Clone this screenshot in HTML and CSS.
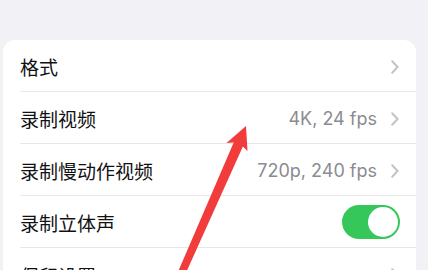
FILE: index.html
```html
<!DOCTYPE html>
<html lang="zh-CN">
<head>
<meta charset="utf-8">
<link rel="stylesheet" href="styles.css">
</head>
<body>
<div class="page">
  <div class="card">
    <div class="row">
      <div class="row-inner">
        <span class="label">格式</span>
        <span class="chev"><svg viewBox="0 0 8 14" width="8" height="14"><path d="M1.2 1.2 L6.6 7 L1.2 12.8" fill="none" stroke="#c4c4c8" stroke-width="2" stroke-linecap="round" stroke-linejoin="round"/></svg></span>
      </div>
    </div>
    <div class="row">
      <div class="row-inner">
        <span class="label">录制视频</span>
        <span class="value">4K, 24 fps</span>
        <span class="chev"><svg viewBox="0 0 8 14" width="8" height="14"><path d="M1.2 1.2 L6.6 7 L1.2 12.8" fill="none" stroke="#c4c4c8" stroke-width="2" stroke-linecap="round" stroke-linejoin="round"/></svg></span>
      </div>
    </div>
    <div class="row">
      <div class="row-inner">
        <span class="label">录制慢动作视频</span>
        <span class="value">720p, 240 fps</span>
        <span class="chev"><svg viewBox="0 0 8 14" width="8" height="14"><path d="M1.2 1.2 L6.6 7 L1.2 12.8" fill="none" stroke="#c4c4c8" stroke-width="2" stroke-linecap="round" stroke-linejoin="round"/></svg></span>
      </div>
    </div>
    <div class="row">
      <div class="row-inner">
        <span class="label">录制立体声</span>
        <span class="toggle"><span class="knob"></span></span>
      </div>
    </div>
    <div class="row">
      <div class="row-inner">
        <span class="label">保留设置</span>
        <span class="chev"><svg viewBox="0 0 8 14" width="8" height="14"><path d="M1.2 1.2 L6.6 7 L1.2 12.8" fill="none" stroke="#c4c4c8" stroke-width="2" stroke-linecap="round" stroke-linejoin="round"/></svg></span>
      </div>
    </div>
  </div>
  <svg class="arrow" viewBox="0 0 428 270" width="428" height="270">
    <polygon points="246,126 247.5,151 242.9,146.4 184.3,276.5 177.3,273.5 233.7,142.4 226.5,143" fill="#f23b3b"/>
  </svg>
</div>
</body>
</html>
```
FILE: styles.css
```css
html, body {
  margin: 0;
  padding: 0;
}
body {
  width: 428px;
  height: 270px;
  overflow: hidden;
  background: #f1f1f6;
  font-family: Inter, "Noto Sans CJK SC", sans-serif;
}
.page {
  position: relative;
  width: 428px;
  height: 270px;
  padding: 40px 12px 0 3px;
  box-sizing: border-box;
  overflow: hidden;
}
.card {
  background: #ffffff;
  border-radius: 12px;
  overflow: hidden;
}
.row {
  height: 52px;
  padding-left: 17px;
  display: flex;
}
.row-inner {
  flex: 1;
  display: flex;
  align-items: center;
  border-bottom: 1px solid #e6e6eb;
  padding-right: 17px;
  padding-top: 2px;
  box-sizing: border-box;
}
.row:last-child .row-inner {
  border-bottom: none;
}
.label {
  flex: 1;
  font-family: "Noto Sans CJK SC", sans-serif;
  font-size: 19px;
  color: #111113;
}
.value {
  font-family: Inter, "Liberation Sans", sans-serif;
  font-size: 18px;
  color: #8b8b90;
  margin-right: 14px;
}
.chev {
  display: flex;
  width: 8px;
  height: 14px;
}
.toggle {
  width: 58px;
  height: 34px;
  border-radius: 17px;
  background: #35c759;
  margin-right: -1px;
  margin-top: -2px;
  display: flex;
  align-items: center;
  justify-content: flex-end;
  padding: 2px;
  box-sizing: border-box;
}
.knob {
  width: 30px;
  height: 30px;
  border-radius: 50%;
  background: #ffffff;
}
.arrow {
  position: absolute;
  left: 0;
  top: 0;
}
```
